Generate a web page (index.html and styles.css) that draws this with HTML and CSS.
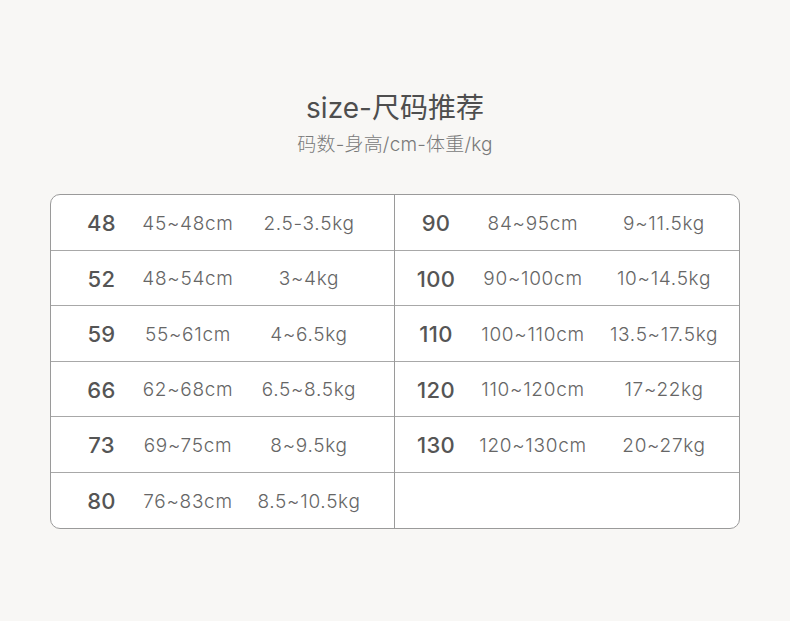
FILE: index.html
```html
<!DOCTYPE html>
<html lang="zh">
<head>
<meta charset="utf-8">
<link rel="stylesheet" href="styles.css">
</head>
<body>
<div class="page">
  <h1 class="title">size-尺码推荐</h1>
  <p class="subtitle">码数-身高/cm-体重/kg</p>
  <div class="table">
    <div class="half left">
      <div class="row"><span class="size">48</span><span>45~48cm</span><span>2.5-3.5kg</span></div>
      <div class="row"><span class="size">52</span><span>48~54cm</span><span>3~4kg</span></div>
      <div class="row"><span class="size">59</span><span>55~61cm</span><span>4~6.5kg</span></div>
      <div class="row"><span class="size">66</span><span>62~68cm</span><span>6.5~8.5kg</span></div>
      <div class="row"><span class="size">73</span><span>69~75cm</span><span>8~9.5kg</span></div>
      <div class="row"><span class="size">80</span><span>76~83cm</span><span>8.5~10.5kg</span></div>
    </div>
    <div class="half right">
      <div class="row"><span class="size">90</span><span>84~95cm</span><span>9~11.5kg</span></div>
      <div class="row"><span class="size">100</span><span>90~100cm</span><span>10~14.5kg</span></div>
      <div class="row"><span class="size">110</span><span>100~110cm</span><span>13.5~17.5kg</span></div>
      <div class="row"><span class="size">120</span><span>110~120cm</span><span>17~22kg</span></div>
      <div class="row"><span class="size">130</span><span>120~130cm</span><span>20~27kg</span></div>
      <div class="row"></div>
    </div>
  </div>
</div>
</body>
</html>
```

FILE: styles.css
```css
html, body {
  margin: 0;
  padding: 0;
  background: #f8f7f5;
}
body {
  width: 790px;
  height: 621px;
  font-family: Inter, "Noto Sans CJK SC", sans-serif;
  color: #666;
}
.page {
  padding-top: 90px;
  display: flex;
  flex-direction: column;
  align-items: center;
}
.title {
  margin: 0;
  font-size: 28px;
  line-height: 36px;
  font-weight: 400;
  color: #4e4e4e;
}
.subtitle {
  margin: 6px 0 0;
  font-size: 19px;
  line-height: 26px;
  font-weight: 300;
  color: #7a7a7a;
  letter-spacing: 0.2px;
}
.table {
  margin-top: 36px;
  width: 688px;
  height: 333px;
  border: 1px solid #9a9a9a;
  border-radius: 10px;
  background: #fff;
  display: grid;
  grid-template-columns: 344px 1fr;
  overflow: hidden;
}
.half {
  display: grid;
  grid-template-rows: repeat(6, 1fr);
}
.left {
  border-right: 1px solid #9a9a9a;
}
.row {
  display: grid;
  align-items: center;
  font-size: 19px;
  font-weight: 300;
  color: #666;
  letter-spacing: 0.7px;
  border-bottom: 1px solid #a8a8a8;
  padding-top: 2px;
}
.row > span {
  display: flex;
  justify-content: center;
  white-space: nowrap;
}
.row:last-child {
  border-bottom: none;
}
.left .row {
  grid-template-columns: 101px 72px 1fr;
}
.right .row {
  grid-template-columns: 82px 112px 1fr;
}
.row > .size {
  font-size: 22px;
  font-weight: 500;
  letter-spacing: 0.3px;
  color: #555;
}
```
